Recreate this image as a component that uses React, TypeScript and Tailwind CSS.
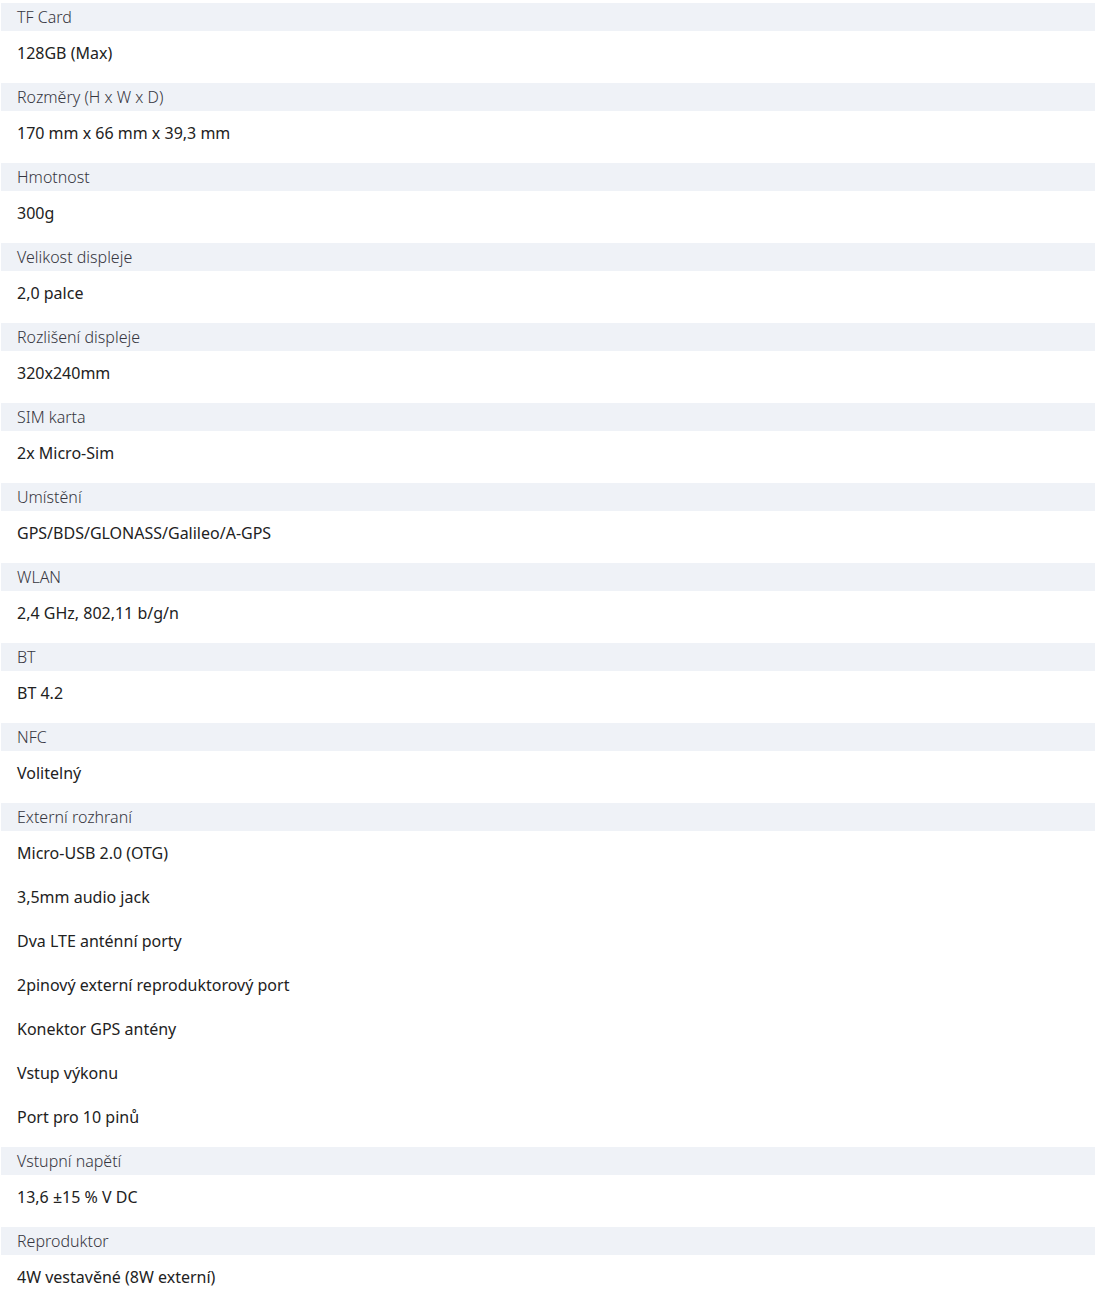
const specs: { label: string; values: string[] }[] = [
  { label: "TF Card", values: ["128GB (Max)"] },
  { label: "Rozměry (H x W x D)", values: ["170 mm x 66 mm x 39,3 mm"] },
  { label: "Hmotnost", values: ["300g"] },
  { label: "Velikost displeje", values: ["2,0 palce"] },
  { label: "Rozlišení displeje", values: ["320x240mm"] },
  { label: "SIM karta", values: ["2x Micro-Sim"] },
  { label: "Umístění", values: ["GPS/BDS/GLONASS/Galileo/A-GPS"] },
  { label: "WLAN", values: ["2,4 GHz, 802,11 b/g/n"] },
  { label: "BT", values: ["BT 4.2"] },
  { label: "NFC", values: ["Volitelný"] },
  {
    label: "Externí rozhraní",
    values: [
      "Micro-USB 2.0 (OTG)",
      "3,5mm audio jack",
      "Dva LTE anténní porty",
      "2pinový externí reproduktorový port",
      "Konektor GPS antény",
      "Vstup výkonu",
      "Port pro 10 pinů",
    ],
  },
  { label: "Vstupní napětí", values: ["13,6 ±15 % V DC"] },
  { label: "Reproduktor", values: ["4W vestavěné (8W externí)"] },
];

export default function App() {
  return (
    <div className="bg-white min-h-[1294px] pt-[3px] pl-px font-['Noto_Sans',sans-serif]">
      <div className="w-[1094px]">
        {specs.map((s) => (
          <div key={s.label} className="pb-2">
            <div className="h-7 flex items-center px-4 bg-[#eff2f7] text-[16px] font-light text-[#363640]">
              {s.label}
            </div>
            {s.values.map((v) => (
              <div key={v} className="h-11 flex items-center px-4 text-[16px] text-[#222]">
                {v}
              </div>
            ))}
          </div>
        ))}
      </div>
    </div>
  );
}
